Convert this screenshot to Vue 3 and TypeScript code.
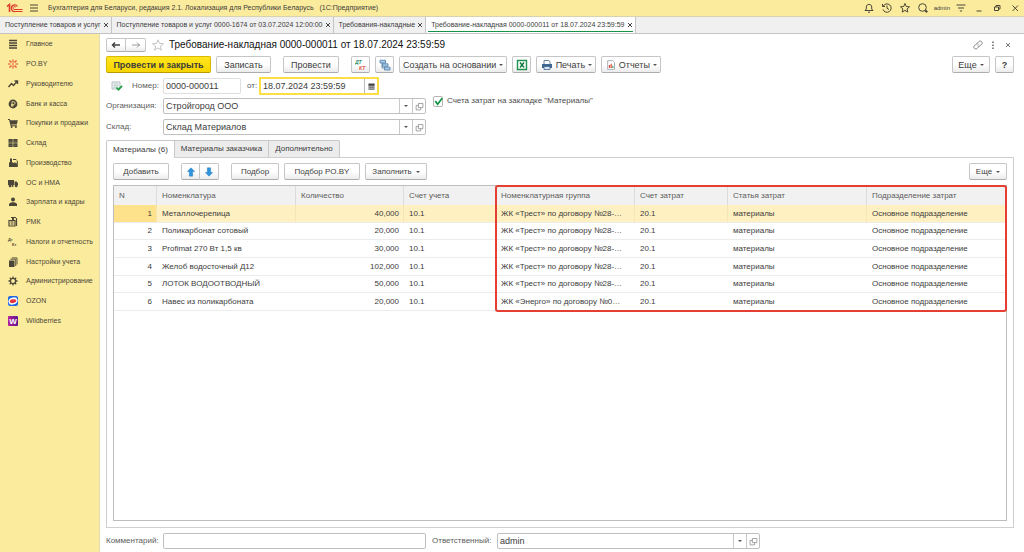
<script setup lang="ts">
import { computed, ref } from 'vue'

interface NavItem { label: string; art: string }
interface Row {
  n: number
  item: string
  qty: string
  account: string
  group: string
  costAccount: string
  costItem: string
  division: string
}
interface Column { key: keyof Row; title: string; width: number; numeric?: boolean }

const nav: NavItem[] = [
  { label: 'Главное', art: '<path d="M2 2.500h8M2 5h8M2 7.500h8M2 10h8" stroke="#4b4738" stroke-width="1.300"/>' },
  { label: 'PO.BY', art: '<g stroke="#e2482d" stroke-width="1.100" fill="none"><path d="M6 1.500v3M6 7.500v3M1 6h2.500M8.500 6H11M2.500 2.500l2 2M9.500 2.500l-2 2M2.500 9.500l2-2M9.500 9.500l-2-2"/></g><circle cx="6" cy="6" r="1" fill="#f08a4a"/>' },
  { label: 'Руководителю', art: '<path d="M1.500 9l3-3.500 2 2L10 3.500M7.500 3H10.500V6" fill="none" stroke="#4b4738" stroke-width="1.400"/>' },
  { label: 'Банк и касса', art: '<circle cx="6" cy="6" r="4.400" fill="#4b4738"/><path d="M5 9V3.700h1.700a1.400 1.400 0 0 1 0 2.800H4M4 7.700h2.700" fill="none" stroke="#fbeb9d" stroke-width=".8"/>' },
  { label: 'Покупки и продажи', art: '<path d="M1 2h1.700l.5 1.200H10.800L9.800 7.400H4.400l.2.900h5.200v.9H3.700L2.100 3H1z" fill="#4b4738"/><circle cx="4.600" cy="10" r="1" fill="#4b4738"/><circle cx="8.900" cy="10" r="1" fill="#4b4738"/>' },
  { label: 'Склад', art: '<path d="M1.500 2h4.200v3.700H1.500zM6.300 2h4.200v3.700H6.300zM1.500 6.300h4.200V10H1.500zM6.300 6.300h4.200V10H6.300z" fill="#4b4738"/><path d="M2.500 4.200h2M7.500 4.200h2M2.500 8.500h2M7.500 8.500h2" stroke="#8a8468" stroke-width=".6"/>' },
  { label: 'Производство', art: '<path d="M2 10V5.500l1-.3V1.500h2V5l2.300 1.500V5l2.500 1.500V4h1V10z" fill="#4b4738"/><path d="M6 2.500h3l1 1M3 8h2" stroke="#4b4738" fill="none"/>' },
  { label: 'ОС и НМА', art: '<path d="M1 3h6v5H1zM7.500 4.500h2.200L11 6.300V8.500H7.500z" fill="#4b4738"/><circle cx="3" cy="9" r="1.300" fill="#4b4738"/><circle cx="5.500" cy="9" r="1.100" fill="#4b4738"/><circle cx="9.200" cy="9" r="1.300" fill="#4b4738"/>' },
  { label: 'Зарплата и кадры', art: '<circle cx="6" cy="3.600" r="2" fill="#4b4738"/><path d="M2 10V8.300C2 7 4 6.700 5 6.300h2c1 .4 3 .7 3 2V10z" fill="#4b4738"/>' },
  { label: 'РМК', art: '<path d="M2 4.500h6V10H2z" fill="none" stroke="#4b4738" stroke-width="1.200"/><path d="M4 1.500h5M9.500 2v8M3.500 6h3M3.500 8h3" stroke="#4b4738" stroke-width="1.200"/><path d="M5 2h2v2H5z" fill="#4b4738"/>' },
  { label: 'Налоги и отчетность', art: '<g fill="#4b4738" font-family="Liberation Sans, sans-serif" font-weight="bold"><text x="1" y="5" font-size="4">Дт</text><text x="5" y="10" font-size="4">Кт</text></g>' },
  { label: 'Настройки учета', art: '<path d="M2 4.500h5.500V11H2z" fill="#4b4738"/><path d="M3.300 3.200h5.400V10M4.800 1.900h5.200V8.500" fill="none" stroke="#4b4738" stroke-width=".9"/>' },
  { label: 'Администрирование', art: '<circle cx="6" cy="6" r="2.600" fill="none" stroke="#4b4738" stroke-width="1.300"/><path d="M6 1.500v1.800M6 8.700v1.800M1.500 6h1.800M8.700 6h1.800M2.800 2.800l1.300 1.300M7.900 7.900l1.300 1.300M9.200 2.800L7.900 4.100M4.100 7.900L2.800 9.200" stroke="#4b4738" stroke-width="1.300"/>' },
  { label: 'OZON', art: '<rect x="1" y="1" width="10" height="10" rx="2" fill="#1f66e5"/><ellipse cx="6" cy="6" rx="4.600" ry="3.500" fill="#fff" transform="rotate(-18 6 6)"/><ellipse cx="6" cy="6.200" rx="3.300" ry="1.900" fill="#e5333f" transform="rotate(-10 6 6)"/>' },
  { label: 'Wildberries', art: '<defs><linearGradient id="wb" x1="0" x2="1"><stop offset="0" stop-color="#b3209a"/><stop offset="1" stop-color="#5c1791"/></linearGradient></defs><rect x="1" y="1" width="10" height="10" rx="1" fill="url(#wb)"/><text x="6" y="9" text-anchor="middle" font-size="8" font-weight="bold" fill="#fff" font-family="Liberation Sans, sans-serif">W</text>' },
]

const windows = [
  'Поступление товаров и услуг',
  'Поступление товаров и услуг 0000-1674 от 03.07.2024 12:00:00',
  'Требования-накладные',
  'Требование-накладная 0000-000011 от 18.07.2024 23:59:59',
]
const activeWindow = ref(3)

const sections = ['Материалы (6)', 'Материалы заказчика', 'Дополнительно']
const activeSection = ref(0)

const columns: Column[] = [
  { key: 'n', title: 'N', width: 43, numeric: true },
  { key: 'item', title: 'Номенклатура', width: 139 },
  { key: 'qty', title: 'Количество', width: 108, numeric: true },
  { key: 'account', title: 'Счет учета', width: 92 },
  { key: 'group', title: 'Номенклатурная группа', width: 139 },
  { key: 'costAccount', title: 'Счет затрат', width: 93 },
  { key: 'costItem', title: 'Статья затрат', width: 139 },
  { key: 'division', title: 'Подразделение затрат', width: 139 },
]

const trest = 'ЖК «Трест» по договору №28-…'
const energo = 'ЖК «Энерго» по договору №0…'
const goods: [string, string, string][] = [
  ['Металлочерепица', '40,000', trest],
  ['Поликарбонат сотовый', '20,000', trest],
  ['Profimat 270 Вт 1,5 кв', '30,000', trest],
  ['Желоб водосточный Д12', '102,000', trest],
  ['ЛОТОК ВОДООТВОДНЫЙ', '50,000', trest],
  ['Навес из поликарбоната', '20,000', energo],
]
const rows: Row[] = goods.map(([item, qty, group], i) => ({
  n: i + 1,
  item,
  qty,
  account: '10.1',
  group,
  costAccount: '20.1',
  costItem: 'материалы',
  division: 'Основное подразделение',
}))
const selected = ref(1)

const totalWidth = columns.reduce((sum, c) => sum + c.width, 0)
const frameLeft = computed(() => {
  const before = columns.slice(0, 4).reduce((sum, c) => sum + c.width, -1)
  return `${(before / totalWidth) * 100}%`
})

const docNumber = ref('0000-000011')
const docDate = ref('18.07.2024 23:59:59')
const organization = ref('Стройгород ООО')
const warehouse = ref('Склад Материалов')
const costsOnTab = ref(true)
const comment = ref('')
const responsible = ref('admin')
</script>

<template>
  <div class="app">
    <header class="titlebar">
      <svg class="logo" viewBox="0 0 17 10" aria-label="1С">
        <path d="M1 3.500L3.500 1.500V9" fill="none" stroke="#dd3b2c" stroke-width="1.600" />
        <path d="M11.500 3.500A3.300 3.300 0 1 0 9 8.500H16.500" fill="none" stroke="#dd3b2c" stroke-width="1.200" />
        <path d="M9.800 4.200A1.500 1.500 0 1 0 9 6.500H16.500" fill="none" stroke="#dd3b2c" stroke-width="1" />
      </svg>
      <button class="glyph burger" aria-label="Меню">
        <svg viewBox="0 0 12 12"><path d="M2 3h8M2 6h8M2 9h8" /></svg>
      </button>
      <span class="app-name">Бухгалтерия для Беларуси, редакция 2.1. Локализация для Республики Беларусь &nbsp; (1С:Предприятие)</span>
      <div class="system">
        <button class="glyph" aria-label="Уведомления"><svg viewBox="0 0 12 12"><path d="M2 8.500h8L8.700 7V5C8.700 1.500 3.300 1.500 3.300 5V7zM5 10.200h2" /></svg></button>
        <button class="glyph" aria-label="История"><svg viewBox="0 0 12 12"><path d="M2.200 4.200A4.200 4.200 0 1 1 2 7.500M1.500 2v2.500H4M6 3.500V6.300L8 7.500" /></svg></button>
        <button class="glyph" aria-label="Избранное"><svg viewBox="0 0 12 12"><path d="M6 1.500l1.300 3 3.200.3-2.400 2.100.7 3.200L6 8.400 3.200 10.100l.7-3.200L1.500 4.800l3.200-.3z" /></svg></button>
        <button class="glyph" aria-label="Поиск"><svg viewBox="0 0 12 12"><circle cx="5.500" cy="5.500" r="3.800" /><path d="M8.200 8.200l2 2" stroke-width="2" /></svg></button>
        <span class="user">admin</span>
        <button class="glyph" aria-label="Настройки"><svg viewBox="0 0 12 12"><path d="M1.500 3h9M3 6h6" /><path d="M4.500 8.500h3L6 10z" fill="#4b4738" stroke="none" /></svg></button>
        <button class="glyph" aria-label="Свернуть"><svg viewBox="0 0 12 12"><path d="M3.500 9h5" /></svg></button>
        <button class="glyph" aria-label="Восстановить"><svg viewBox="0 0 12 12"><path d="M3.500 5h4v3.500h-4zM5 5V3.500h4V7H7.500" /></svg></button>
        <button class="glyph" aria-label="Закрыть"><svg viewBox="0 0 12 12"><path d="M3.500 3.500l5.500 5.500M9 3.500L3.500 9" /></svg></button>
      </div>
    </header>

    <nav class="windows" aria-label="Открытые окна">
      <div v-for="(w, i) in windows" :key="w" class="window-tab" :class="{ active: i === activeWindow }">
        <button class="window-name" @click="activeWindow = i">{{ w }}</button>
        <button class="window-close" aria-label="Закрыть"><svg viewBox="0 0 6 6"><path d="M1 1l4 4M5 1L1 5" /></svg></button>
      </div>
    </nav>

    <div class="body">
      <nav class="sidebar" aria-label="Разделы">
        <a v-for="item in nav" :key="item.label" href="#" class="nav-item">
          <svg viewBox="0 0 12 12" aria-hidden="true" v-html="item.art"></svg>
          <span>{{ item.label }}</span>
        </a>
      </nav>

      <main class="form">
        <div class="heading">
          <div class="pair history">
            <button class="btn" aria-label="Назад"><svg viewBox="0 0 12 12"><path d="M2 6h8M5 3.500L2.500 6 5 8.500" stroke="#444" stroke-width="1.500" /></svg></button>
            <button class="btn" aria-label="Вперед"><svg viewBox="0 0 12 12"><path d="M2 6h8M7 3.500L9.500 6 7 8.500" stroke="#999" /></svg></button>
          </div>
          <button class="glyph favorite" aria-label="В избранное"><svg viewBox="0 0 12 12"><path d="M6 .8l1.500 3.600 3.900.3-3 2.500.9 3.900L6 9l-3.300 2.100.9-3.900-3-2.500 3.900-.3z" stroke="#aaa" stroke-width=".7" /></svg></button>
          <h1>Требование-накладная 0000-000011 от 18.07.2024 23:59:59</h1>
          <div class="form-tools">
            <button class="glyph" aria-label="Ссылка"><svg viewBox="0 0 12 12"><path d="M5 4.500l2-2c1.500-1.500 4.300.8 2.800 2.500L8 6.800C7.300 7.500 6 7.500 5.500 6.700M7 7.500l-2 2C3.500 11 .7 8.700 2.200 7L4 5.200c.7-.7 2-.7 2.500.1" stroke="#777" stroke-width=".9" /></svg></button>
            <button class="glyph" aria-label="Дополнительно"><svg viewBox="0 0 12 12"><path d="M6 2.500V4M6 5.500V7M6 8.500V10" stroke="#666" stroke-width="1.500" /></svg></button>
            <button class="glyph" aria-label="Закрыть форму"><svg viewBox="0 0 12 12"><path d="M4 4l4 4M8 4L4 8" stroke="#777" /></svg></button>
          </div>
        </div>

        <div class="commands main-commands">
          <button class="btn primary">Провести и закрыть</button>
          <button class="btn w55">Записать</button>
          <button class="btn w56 gap-before">Провести</button>
          <button class="btn icon-btn gap-before" aria-label="Дт/Кт">
            <svg viewBox="0 0 12 12"><g font-family="Liberation Sans, sans-serif" font-weight="bold" font-style="italic" font-size="5"><text x="0" y="5" fill="#2f8f6a">ДТ</text><text x="4" y="11" fill="#e0503c">КТ</text></g></svg>
          </button>
          <button class="btn icon-btn" aria-label="Структура подчиненности">
            <svg viewBox="0 0 12 12"><path d="M3 3.500v5.500h3M5 6h3" fill="none" stroke="#5b7fa5" stroke-width=".9" /><path d="M1 1.200h5.500v2.800H1zM3.500 4.800H9v2.500H3.500zM5.500 8.200H11V11H5.500z" fill="#a9cbe8" stroke="#4d7ba8" stroke-width=".8" /></svg>
          </button>
          <button class="btn w108">Создать на основании<i class="caret"></i></button>
          <button class="btn icon-btn" aria-label="Excel">
            <svg viewBox="0 0 12 12"><path d="M1.500 1.500h9v9h-9z" fill="#fff" stroke="#1f9150" stroke-width="1.400" /><path d="M4 3.500l4 5M8 3.500l-4 5" stroke="#157a3f" stroke-width="1.500" /></svg>
          </button>
          <button class="btn w60">
            <svg viewBox="0 0 12 12"><path d="M3 5V1.500h5L9 3v2" fill="#fff" stroke="#5b7894" stroke-width=".9" /><path d="M1 5h10v4H1z" fill="#3f6690" /><path d="M3 7.500h6v3H3z" fill="#d9e5f0" stroke="#3f6690" stroke-width=".8" /></svg>
            Печать<i class="caret"></i>
          </button>
          <button class="btn w60">
            <svg class="report" viewBox="0 0 12 12"><path d="M2 .8h6l2.200 2.200v8.200H2z" fill="#fff" stroke="#8d99a6" stroke-width=".9" /><path d="M4.200 9.500V6" stroke="#d94b3c" stroke-width="1.600" /><path d="M6.200 9.500V4.500" stroke="#d94b3c" stroke-width="1.400" /><path d="M8.200 9.500V7" stroke="#4b9b57" stroke-width="1.400" /></svg>
            Отчеты<i class="caret"></i>
          </button>
          <button class="btn w38 push">Еще<i class="caret"></i></button>
          <button class="btn icon-btn help" aria-label="Справка">?</button>
        </div>

        <div class="field-row number-row">
          <svg class="posted" viewBox="0 0 12 12" aria-hidden="true"><path d="M1 2h8v7H1z" fill="#f1f4f7" stroke="#a5afb8" stroke-width=".8" /><path d="M2.500 4h5M2.500 5.700h5M2.500 7.300h3" stroke="#9dbcae" stroke-width=".7" /><path d="M5.500 7.500l2 2.200L11 5.800" fill="none" stroke="#22a045" stroke-width="1.800" /></svg>
          <label for="number">Номер:</label>
          <input id="number" v-model="docNumber" class="box number" type="text" />
          <label for="date" class="from">от:</label>
          <div class="date">
            <input id="date" v-model="docDate" type="text" />
            <button aria-label="Выбрать дату"><svg viewBox="0 0 12 12"><path d="M2 3h8v7.500H2z" fill="#777" /><path d="M2 2h8v2.500H2z" fill="#444" /><path d="M3 6.200h6M3 8.500h6" stroke="#ddd" stroke-width=".9" stroke-dasharray="1.500 .8" /></svg></button>
          </div>
        </div>

        <div class="with-check">
          <div class="refs">
            <div class="field-row">
              <label for="org" class="caption">Организация:</label>
              <div class="combo">
                <select id="org" v-model="organization"><option>Стройгород ООО</option></select>
                <span class="drop"><i class="caret"></i></span>
                <button aria-label="Открыть организацию"><svg viewBox="0 0 12 12"><path d="M4.500 2H10.500v5.500H4.500zM4.500 4.500H1.500V10.500h6V7.500" /></svg></button>
              </div>
            </div>
            <div class="field-row">
              <label for="store" class="caption">Склад:</label>
              <div class="combo">
                <select id="store" v-model="warehouse"><option>Склад Материалов</option></select>
                <span class="drop"><i class="caret"></i></span>
                <button aria-label="Открыть склад"><svg viewBox="0 0 12 12"><path d="M4.500 2H10.500v5.500H4.500zM4.500 4.500H1.500V10.500h6V7.500" /></svg></button>
              </div>
            </div>
          </div>
          <label class="check">
            <span class="tick">
              <input v-model="costsOnTab" type="checkbox" />
              <svg v-if="costsOnTab" viewBox="0 0 12 12" aria-hidden="true"><path d="M2.500 5.500L5 9l5-6.500" fill="none" stroke="#159447" stroke-width="1.900" /></svg>
            </span>
            Счета затрат на закладке "Материалы"
          </label>
        </div>

        <div class="sections" role="tablist">
          <button v-for="(s, i) in sections" :key="s" role="tab" :aria-selected="i === activeSection" :class="{ active: i === activeSection }" @click="activeSection = i">{{ s }}</button>
        </div>

        <section class="panel">
          <div class="commands">
            <button class="btn w56">Добавить</button>
            <div class="pair gap-before">
              <button class="btn" aria-label="Вверх"><svg class="arrow" viewBox="0 0 12 12"><path d="M6 1l4.500 4.500H8V11H4V5.500H1.500z" fill="#2f94dc" stroke="#1d74b8" stroke-width=".5" /></svg></button>
              <button class="btn" aria-label="Вниз"><svg class="arrow" viewBox="0 0 12 12"><path d="M6 11l4.500-4.500H8V1H4v5.500H1.500z" fill="#2f94dc" stroke="#1d74b8" stroke-width=".5" /></svg></button>
            </div>
            <button class="btn w48 gap-before">Подбор</button>
            <button class="btn w76">Подбор PO.BY</button>
            <button class="btn w62">Заполнить<i class="caret"></i></button>
            <button class="btn w38 push">Еще<i class="caret"></i></button>
          </div>

          <div class="grid">
            <div class="grid-content">
              <table>
                <colgroup><col v-for="c in columns" :key="c.key" :style="{ width: c.width + 'px' }" /></colgroup>
                <thead>
                  <tr><th v-for="c in columns" :key="c.key" scope="col">{{ c.title }}</th></tr>
                </thead>
                <tbody>
                  <tr v-for="r in rows" :key="r.n" :class="{ selected: r.n === selected }" @click="selected = r.n">
                    <td v-for="c in columns" :key="c.key" :class="{ numeric: c.numeric }">{{ r[c.key] }}</td>
                  </tr>
                </tbody>
              </table>
              <div class="frame" :style="{ left: frameLeft }"></div>
            </div>
          </div>
        </section>

        <footer class="field-row bottom">
          <label for="comment" class="caption">Комментарий:</label>
          <input id="comment" v-model="comment" class="box comment" type="text" />
          <label for="resp" class="resp">Ответственный:</label>
          <div class="combo">
            <select id="resp" v-model="responsible"><option>admin</option></select>
            <span class="drop"><i class="caret"></i></span>
            <button aria-label="Открыть ответственного"><svg viewBox="0 0 12 12"><path d="M4.500 2H10.500v5.500H4.500zM4.500 4.500H1.500V10.500h6V7.500" /></svg></button>
          </div>
        </footer>
      </main>
    </div>
  </div>
</template>

<style>
body {
  margin: 0;
  background: #fff;
}
</style>

<style scoped>
.app,
.app * {
  box-sizing: border-box;
}
.app {
  display: flex;
  flex-direction: column;
  min-height: 100vh;
  font-family: "Liberation Sans", Arial, sans-serif;
  font-size: 8px;
  line-height: 12px;
  color: #3c3c3c;
}
button,
input,
select {
  font: inherit;
  color: inherit;
  margin: 0;
  padding: 0;
  border: 0;
  background: none;
  outline: none;
  border-radius: 0;
  min-width: 0;
}
button {
  display: flex;
  align-items: center;
  justify-content: center;
  white-space: nowrap;
}
svg {
  display: block;
  width: 12px;
  height: 12px;
  flex: none;
}
.titlebar {
  display: flex;
  align-items: center;
  height: 16px;
  padding: 0 3px 0 6px;
  background: #fbeb9d;
  font-size: 7px;
}
.logo {
  width: 17px;
  height: 10px;
}
.glyph svg {
  fill: none;
  stroke: #4b4738;
}
.burger {
  margin: 0 8px 0 5px;
}
.app-name {
  white-space: pre;
}
.system {
  display: flex;
  align-items: center;
  gap: 6px;
  margin-left: auto;
}
.user {
  font-size: 6px;
  margin: 0 -1px;
}
.windows {
  display: flex;
  height: 18px;
  background: #f0f0f0;
  border-bottom: 1px solid #c4c4c4;
  border-top: 1px solid #d9d2ae;
  font-size: 7px;
}
.window-tab {
  position: relative;
  display: flex;
  align-items: center;
  gap: 2px;
  padding: 0 2px 0 5px;
  border-right: 1px solid #c4c4c4;
}
.window-tab.active {
  background: #fff;
}
.window-tab.active::after {
  content: "";
  position: absolute;
  left: 2px;
  right: 2px;
  bottom: 1px;
  height: 1px;
  background: #159447;
}
.window-close svg {
  width: 6px;
  height: 6px;
  stroke: #444;
}
.body {
  display: flex;
  flex: 1;
}
.sidebar {
  flex: none;
  display: flex;
  flex-direction: column;
  width: 100px;
  background: #fbeb9d;
  border-right: 1px solid #e3dcae;
  font-size: 7px;
}
.nav-item {
  display: flex;
  align-items: center;
  gap: 7px;
  height: 20px;
  padding-left: 7px;
  color: #4b4738;
  text-decoration: none;
  white-space: nowrap;
}
.nav-item:nth-child(4n) {
  height: 19px;
}
.form {
  flex: 1;
  min-width: 0;
  display: flex;
  flex-direction: column;
  padding: 4px 10px 3px 6px;
}
.heading {
  display: flex;
  align-items: center;
  height: 14px;
}
.btn {
  height: 17px;
  padding: 0 3px;
  gap: 4px;
  border: 1px solid #c6c6c6;
  border-bottom-color: #adadad;
  border-radius: 2px;
  background: linear-gradient(#fff 50%, #ececec);
}
.btn svg {
  fill: none;
}
.btn .arrow {
  width: 10px;
  height: 10px;
}
.pair {
  display: flex;
}
.pair .btn {
  width: 19px;
}
.pair .btn:first-child {
  border-radius: 2px 0 0 2px;
}
.pair .btn:last-child {
  border-left: 0;
  border-radius: 0 2px 2px 0;
}
.history .btn {
  width: 20px;
  height: 14px;
}
.favorite {
  margin: 0 5px 0 6px;
}
h1 {
  margin: 0;
  font-size: 10px;
  font-weight: 400;
  color: #111;
  white-space: nowrap;
}
.form-tools {
  display: flex;
  gap: 3px;
  margin-left: auto;
}
.commands {
  display: flex;
  align-items: center;
  gap: 5px;
}
.main-commands {
  margin-top: 4px;
  font-size: 9px;
}
.main-commands .btn {
  gap: 3px;
}
.report {
  width: 10px;
  height: 10px;
}
.gap-before {
  margin-left: 7px;
}
.push {
  margin-left: auto;
}
.primary {
  min-width: 105px;
  border-color: #d9b800;
  border-bottom-color: #b99d00;
  background: linear-gradient(#ffe51f, #f7d500);
  font-weight: 700;
}
.icon-btn {
  width: 19px;
}
.w38 { min-width: 38px; }
.w48 { min-width: 48px; }
.w55 { min-width: 55px; }
.w56 { min-width: 56px; }
.w60 { min-width: 60px; }
.w62 { min-width: 62px; }
.w76 { min-width: 76px; }
.w108 { min-width: 108px; }
.help {
  font-weight: 700;
}
.caret {
  width: 0;
  height: 0;
  border: 2px solid transparent;
  border-top-color: #555;
  border-bottom: 0;
}
.field-row {
  display: flex;
  align-items: center;
}
.field-row > label {
  color: #5c5c5c;
  white-space: nowrap;
}
.number-row {
  margin-top: 4px;
  height: 18px;
}
.posted {
  margin: 0 9px 0 5px;
}
.number-row > label {
  width: 31px;
}
.number-row > .from {
  width: 12px;
  margin-left: 6px;
}
.box,
.combo {
  height: 16px;
  border: 1px solid #c0c0c0;
  border-radius: 2px;
  background: #fff;
}
.box {
  padding: 0 2px;
}
.number {
  width: 78px;
  border-color: #dedede;
}
.number,
.date,
.combo {
  font-size: 9px;
}
.date {
  display: flex;
  align-items: center;
  width: 120px;
  height: 18px;
  border: 2px solid #fbdf45;
}
.date input {
  flex: 1;
  padding-left: 2px;
}
.date button {
  width: 13px;
  height: 14px;
  border-left: 1px solid #bbb;
}
.date svg {
  width: 9px;
  height: 9px;
}
.with-check {
  display: flex;
  align-items: flex-start;
  gap: 7px;
}
.refs {
  display: flex;
  flex-direction: column;
  gap: 5px;
  margin-top: 3px;
}
.caption {
  width: 57px;
}
.combo {
  display: flex;
  width: 263px;
}
.combo select {
  flex: 1;
  appearance: none;
  padding: 0 2px;
}
.drop,
.combo button {
  display: flex;
  align-items: center;
  justify-content: center;
  width: 13px;
  border-left: 1px solid #c9c9c9;
}
.combo svg {
  width: 9px;
  height: 9px;
  fill: none;
  stroke: #888;
}
.check {
  display: flex;
  align-items: center;
  gap: 4px;
  color: #4c4c4c;
  white-space: nowrap;
}
.tick {
  display: grid;
  width: 10px;
  height: 11px;
}
.tick input,
.tick svg {
  grid-area: 1 / 1;
}
.tick input {
  appearance: none;
  width: 10px;
  height: 11px;
  border: 1px solid #b5b5b5;
  border-radius: 2px;
}
.tick svg {
  pointer-events: none;
  width: 11px;
  height: 11px;
}
.sections {
  display: flex;
  margin-top: 5px;
}
.sections button {
  height: 17px;
  padding: 0 6px;
  background: #ececec;
  border: 1px solid #c8c8c8;
  border-left: 0;
  border-bottom: 0;
}
.sections button.active {
  height: 18px;
  margin-bottom: -1px;
  border-left: 1px solid #c8c8c8;
  border-radius: 2px 0 0 0;
  background: #fff;
  z-index: 1;
}
.sections button:last-child {
  border-radius: 0 2px 0 0;
}
.panel {
  flex: 1;
  display: flex;
  flex-direction: column;
  gap: 5px;
  padding: 5px 6px 6px;
  border: 1px solid #cfcfcf;
}
.grid {
  flex: 1;
  border: 1px solid #bdbdbd;
}
.grid-content {
  position: relative;
}
table {
  width: 100%;
  table-layout: fixed;
  border-collapse: separate;
  border-spacing: 0;
}
th {
  height: 19px;
  padding: 0 5px;
  text-align: left;
  font-weight: 400;
  color: #5c5c5c;
  background: #f1f1f1;
  border-right: 1px solid #dcdcdc;
  white-space: nowrap;
}
td {
  height: 18px;
  padding: 0 5px;
  border-bottom: 1px solid #ececec;
  overflow: hidden;
  text-overflow: ellipsis;
  white-space: nowrap;
}
tr:nth-child(3n + 2) td {
  height: 17px;
}
th:last-child {
  border-right: 0;
}
.numeric {
  text-align: right;
}
th.numeric {
  text-align: left;
}
.selected td {
  background: #fff0c2;
  border-right: 1px solid #f6e6b5;
}
.selected td:first-child {
  background: #fde28b;
}
.selected td.numeric {
  padding-right: 4px;
}
.frame {
  position: absolute;
  top: -1px;
  right: -1px;
  bottom: -1px;
  border: 2px solid #e53e33;
  border-radius: 3px;
  pointer-events: none;
}
.bottom {
  margin-top: 5px;
}
.comment {
  width: 263px;
}
.resp {
  width: 65px;
  margin-left: 6px;
}
</style>
